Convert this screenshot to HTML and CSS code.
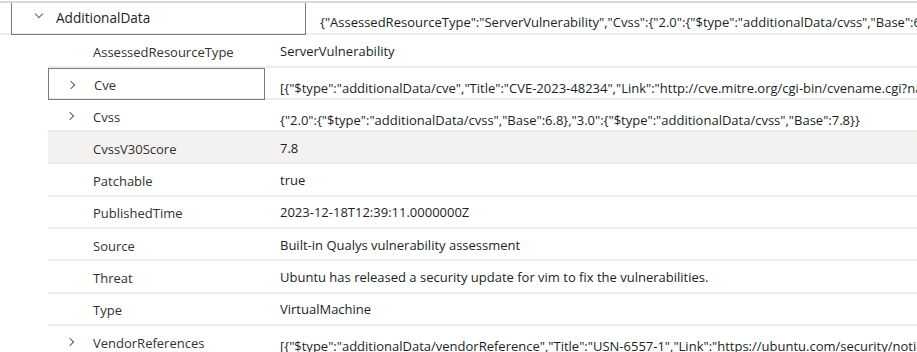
FILE: index.html
```html
<!DOCTYPE html>
<html lang="en">
<head>
    <meta charset="UTF-8">
    <title>AdditionalData</title>
    <link rel="stylesheet" href="styles.css">
</head>
<body>

    <!-- Корневой узел дерева -->
    <div class="tree">
        <div class="row root-row">
            <div class="key-box root-key">
                <span class="chevron down"></span>
                <span class="key-text root-text">AdditionalData</span>
            </div>
            <div class="value json root-value">{"AssessedResourceType":"ServerVulnerability","Cvss":{"2.0":{"$type":"additionalData/cvss","Base":6.8},"3.0":{"$type":"additionalData/cvss","Base":7.8}},"CvssV30Score":7.8}</div>
        </div>

        <!-- Вложенные строки -->
        <div class="children">
            <div class="row">
                <div class="key"><span class="key-text">AssessedResourceType</span></div>
                <div class="value">ServerVulnerability</div>
            </div>
            <div class="row">
                <div class="key key-box">
                    <span class="chevron right"></span>
                    <span class="key-text">Cve</span>
                </div>
                <div class="value json">[{"$type":"additionalData/cve","Title":"CVE-2023-48234","Link":"http://cve.mitre.org/cgi-bin/cvename.cgi?name=CVE-2023-48234"}]</div>
            </div>
            <div class="row">
                <div class="key">
                    <span class="chevron right"></span>
                    <span class="key-text">Cvss</span>
                </div>
                <div class="value json">{"2.0":{"$type":"additionalData/cvss","Base":6.8},"3.0":{"$type":"additionalData/cvss","Base":7.8}}</div>
            </div>
            <div class="row selected">
                <div class="key"><span class="key-text">CvssV30Score</span></div>
                <div class="value">7.8</div>
            </div>
            <div class="row">
                <div class="key"><span class="key-text">Patchable</span></div>
                <div class="value">true</div>
            </div>
            <div class="row">
                <div class="key"><span class="key-text">PublishedTime</span></div>
                <div class="value">2023-12-18T12:39:11.0000000Z</div>
            </div>
            <div class="row">
                <div class="key"><span class="key-text">Source</span></div>
                <div class="value">Built-in Qualys vulnerability assessment</div>
            </div>
            <div class="row">
                <div class="key"><span class="key-text">Threat</span></div>
                <div class="value">Ubuntu has released a security update for vim to fix the vulnerabilities.</div>
            </div>
            <div class="row">
                <div class="key"><span class="key-text">Type</span></div>
                <div class="value">VirtualMachine</div>
            </div>
            <div class="row">
                <div class="key">
                    <span class="chevron right"></span>
                    <span class="key-text">VendorReferences</span>
                </div>
                <div class="value json">[{"$type":"additionalData/vendorReference","Title":"USN-6557-1","Link":"https://ubuntu.com/security/notices/USN-6557-1"}]</div>
            </div>
        </div>
    </div>

</body>
</html>
```

FILE: styles.css
```css
body {
    font-family: 'Open Sans', 'Noto Sans', sans-serif;
    font-size: 13px;
    color: #201f1e;
    background-color: #ffffff;
    margin: 0;
    padding: 0;
    overflow: hidden;
}

/* Дерево */
.tree {
    border-top: 2px solid #d5d8dc;
    margin-top: 1px;
    width: 917px;
}

.row {
    display: flex;
    height: 32.3px;
    border-bottom: 2px solid #ececec;
    box-sizing: border-box;
    white-space: nowrap;
}

.children {
    margin-left: 48px;
}

.selected {
    background-color: #f3f2f1;
}

/* Ячейка ключа */
.key {
    width: 217px;
    flex: none;
    display: flex;
    align-items: center;
    padding-left: 45px;
    box-sizing: border-box;
    position: relative;
    color: #323130;
}

.key-box {
    border: 1.5px solid #7a7a7a;
    margin-bottom: -2px;
}

.root-key {
    width: 295px;
    flex: none;
    display: flex;
    align-items: center;
    margin-left: 11px;
    padding-left: 44px;
    box-sizing: border-box;
    position: relative;
    border-top: none;
}

.root-text {
    font-size: 13.6px;
    color: #201f1e;
    margin-top: -3px !important;
}

.key-text {
    margin-top: 3px;
}

/* Шевроны */
.chevron {
    position: absolute;
    width: 5px;
    height: 5px;
    border-right: 1.2px solid #605e5c;
    border-bottom: 1.2px solid #605e5c;
}

.chevron.right {
    left: 19px;
    top: 13px;
    transform: rotate(-45deg);
}

.chevron.down {
    left: 24px;
    top: 8px;
    transform: rotate(45deg);
}

/* Ячейка значения */
.value {
    flex: 1;
    display: flex;
    align-items: center;
    padding-left: 15px;
    overflow: hidden;
    color: #201f1e;
    margin-top: 1px;
}

.value.json {
    margin-top: 10px;
}

.root-value {
    padding-left: 14px;
    margin-top: 8px !important;
}
```
